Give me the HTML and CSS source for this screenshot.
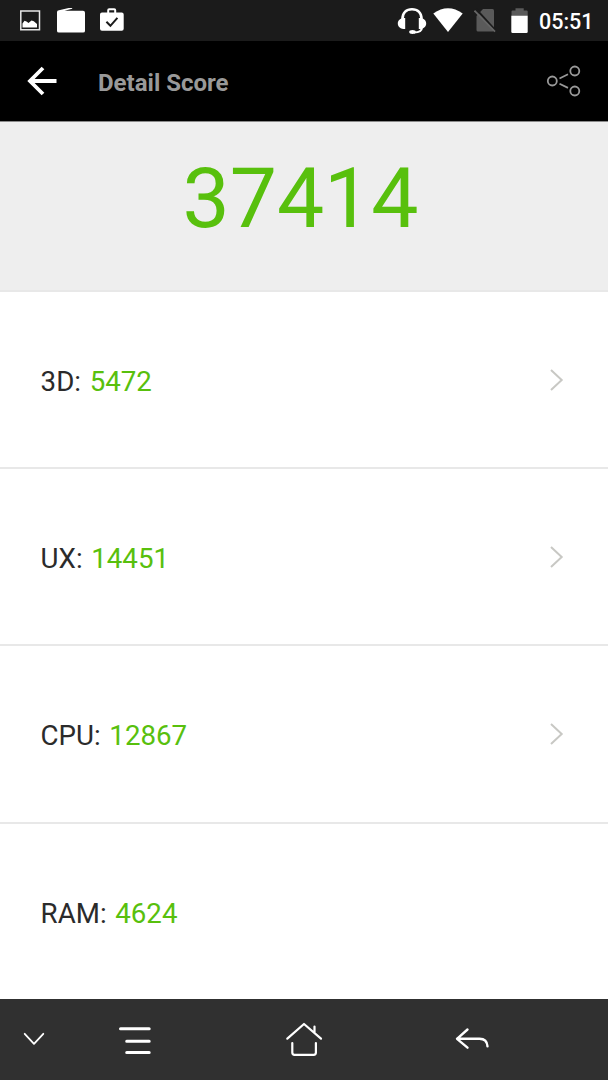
FILE: index.html
```html
<!DOCTYPE html>
<html lang="en">
<head>
<meta charset="utf-8">
<title>Detail Score</title>
<link rel="stylesheet" href="styles.css">
</head>
<body>
<div class="screen">
  <header class="status-bar">
    <div class="notifications">
      <svg width="22" height="22" viewBox="0 0 22 22"><path fill="none" stroke="#e8e8e8" stroke-width="1.5" d="M1.800 1h18.700v18.700H1.800z"/><path fill="#fff" d="M3.500 17.500v-4l2-2.700 2 .7 2 1.500 3-2.500 2.300.800 3.200 2.700v3.500z"/></svg>
      <svg width="30" height="26" viewBox="0 0 30 26"><path fill="#fff" d="M3 2.200L16.200-.800v1.500L8.500 2.800H27q2 0 2 2V23q0 1.500-2 1.500H3q-2 0-2-1.500V4q0-1.600 2-1.800z"/></svg>
      <svg width="26" height="24" viewBox="0 0 26 24"><path fill="#fff" fill-rule="evenodd" d="M8.200 4.500V2.200Q8.200.200 10.200.200h5q2 0 2 2v2.300h5.500q2 0 2 2v14.300q0 2-2 2H3q-2 0-2-2V6.500q0-2 2-2zm2 0h5V2.200h-5z"/><path fill="none" stroke="#1b1b1b" stroke-width="2" d="M7.400 13.800l4 4 7-8"/></svg>
    </div>
    <div class="indicators">
      <svg class="headset" width="30" height="28" viewBox="0 0 30 28"><g fill="none" stroke="#fff"><path stroke-width="2.600" d="M5.500 12C5.500 5.500 9.500 2.200 15 2.200S24.500 5.500 24.500 12"/><path stroke-width="2" d="M25 20c0 4-3 5.500-8 5.500"/></g><path fill="#fff" d="M8.200 11v11C3.500 22 .800 20 .800 16.500S3.500 11 8.200 11zM21.800 11v11c4.700 0 7.400-2 7.400-5.500S26.500 11 21.800 11z"/><ellipse cx="15.500" cy="25" rx="3.300" ry="1.900" fill="#fff"/></svg>
      <svg class="wifi" width="30" height="25" viewBox="0 0 30 25"><path fill="#fff" d="M.300 5.500Q15-5 29.700 5.500L15 24z"/></svg>
      <svg class="no-sim" width="22" height="25" viewBox="0 0 22 25"><path fill="#5a5a5a" d="M9 1h9.500q1.500 0 1.500 1.500V22q0 1.500-1.500 1.500H4Q2.500 23.500 2.500 22V8z"/><path stroke="#1b1b1b" stroke-width="2" d="M2 1l20 22"/><path stroke="#666" stroke-width="1.700" d="M.500 2.700l20.500 21"/></svg>
      <svg class="battery" width="17" height="26" viewBox="0 0 17 26"><path fill="#5a5a5a" d="M.500 8V3.500q0-1 1-1h3V.300h8.200v2.200h3q1 0 1 1V8z"/><path fill="#fff" d="M.300 7.700h16.400v16q0 1.300-1.300 1.300H1.600Q.300 25 .300 23.700z"/></svg>
      <span class="clock">05:51</span>
    </div>
  </header>

  <nav class="app-bar">
    <svg class="back" width="30" height="30" viewBox="0 0 30 30"><path fill="none" stroke="#fff" stroke-width="3.800" d="M29.500 15H4M16 2L3 15l13 13"/></svg>
    <h1 class="title">Detail Score</h1>
    <svg class="share" width="36" height="34" viewBox="0 0 36 34"><g fill="none" stroke="#999" stroke-width="1.800"><circle cx="6.300" cy="17" r="4.500"/><circle cx="28.800" cy="7" r="4.500"/><circle cx="28.800" cy="27" r="4.500"/><path d="M13.500 14.500l8.500-4.200M13.500 19.700l8.500 4.200"/></g></svg>
  </nav>

  <section class="total"><span>37414</span></section>

  <main class="scores">
    <div class="row"><span class="label">3D:</span><span class="value">5472</span><svg class="chevron" width="16" height="24" viewBox="0 0 16 24"><path d="M2 2l10.700 10L2 22"/></svg></div>
    <div class="row"><span class="label">UX:</span><span class="value">14451</span><svg class="chevron" width="16" height="24" viewBox="0 0 16 24"><path d="M2 2l10.700 10L2 22"/></svg></div>
    <div class="row"><span class="label">CPU:</span><span class="value">12867</span><svg class="chevron" width="16" height="24" viewBox="0 0 16 24"><path d="M2 2l10.700 10L2 22"/></svg></div>
    <div class="row"><span class="label">RAM:</span><span class="value">4624</span></div>
  </main>

  <footer class="nav-bar">
    <svg class="hide" width="22" height="14" viewBox="0 0 22 14"><path stroke-width="1.800" d="M1.700 1.800l9.300 10 9.300-10"/></svg>
    <svg class="menu" width="34" height="30" viewBox="0 0 34 30"><path stroke-width="3" d="M1.500 2.800h28.700M7.700 15.200h22.500M7.700 26.500h22.500"/></svg>
    <svg class="home" width="38" height="36" viewBox="0 0 38 36"><path stroke-width="2.200" d="M2.300 17.700L19 3l17 14.700M29.500 5.500v6.500M7.300 22v9.500q0 2.300 2.300 2.300h19q2.300 0 2.300-2.300V22"/></svg>
    <svg class="return" width="36" height="24" viewBox="0 0 36 24"><path stroke-width="2.400" d="M13.500 2.500L3 11.800l10.500 8.900M3 11.800h22.500q7.500 0 8 7.600"/></svg>
  </footer>
</div>
</body>
</html>
```
FILE: styles.css
```css
* { box-sizing: border-box; }
body { margin: 0; font-family: Roboto, "Noto Sans", sans-serif; }
svg { display: block; flex: none; }

.screen {
  display: flex;
  flex-direction: column;
  width: 608px;
  height: 1080px;
  background: #fff;
  overflow: hidden;
}

.status-bar {
  display: flex;
  justify-content: space-between;
  align-items: center;
  flex: none;
  height: 41px;
  padding: 0 14px 0 19px;
  background: #1b1b1b;
}
.notifications, .indicators { display: flex; align-items: center; }
.notifications { gap: 15px; }
.notifications svg:last-child { margin: -1px 0 0 -2px; }
.wifi { margin-left: 6px; }
.no-sim { margin-left: 11px; }
.battery { margin-left: 15px; }
.clock {
  width: 55px;
  margin: 2px 0 0 11px;
  color: #fff;
  font-size: 21.500px;
  font-weight: 500;
  line-height: 26px;
  white-space: nowrap;
}

.app-bar {
  display: flex;
  align-items: center;
  flex: none;
  height: 80px;
  padding: 0 26px 0 27px;
  background: #000;
}
.title {
  flex: 1;
  margin: 3px 0 0 41px;
  color: #999;
  font-size: 24px;
  font-weight: 700;
  line-height: 30px;
}

.total {
  flex: none;
  height: 171px;
  padding: 28px 7px 0 0;
  border-top: 1px solid #8a8a8a;
  border-bottom: 2px solid #e8e8e8;
  background: #eee;
  color: #58c00d;
  font-size: 84px;
  line-height: 98px;
  text-align: center;
}

.scores { flex: none; height: 707px; }
.row {
  display: flex;
  align-items: center;
  height: 177.200px;
  padding: 4px 43px 0 40.600px;
  border-bottom: 2px solid #e8e8e8;
  font-size: 27.700px;
  line-height: 34px;
}
.row:last-child { border-bottom: 0; }
.label { color: #2b2b2b; }
.value { margin-left: 8.600px; color: #58c00d; }
.chevron {
  margin: -4px 0 0 auto;
  fill: none;
  stroke: #c8c8c4;
  stroke-width: 2;
}

.nav-bar {
  display: flex;
  align-items: center;
  flex: none;
  height: 81px;
  padding-left: 23px;
  background: #303030;
}
.nav-bar svg { fill: none; stroke: #fff; stroke-linecap: round; stroke-linejoin: round; }
.hide { margin-top: -1px; }
.menu { margin: 2px 0 0 74px; }
.home { margin: -2px 0 0 132px; }
.return { margin: -1px 0 0 131px; }
```
